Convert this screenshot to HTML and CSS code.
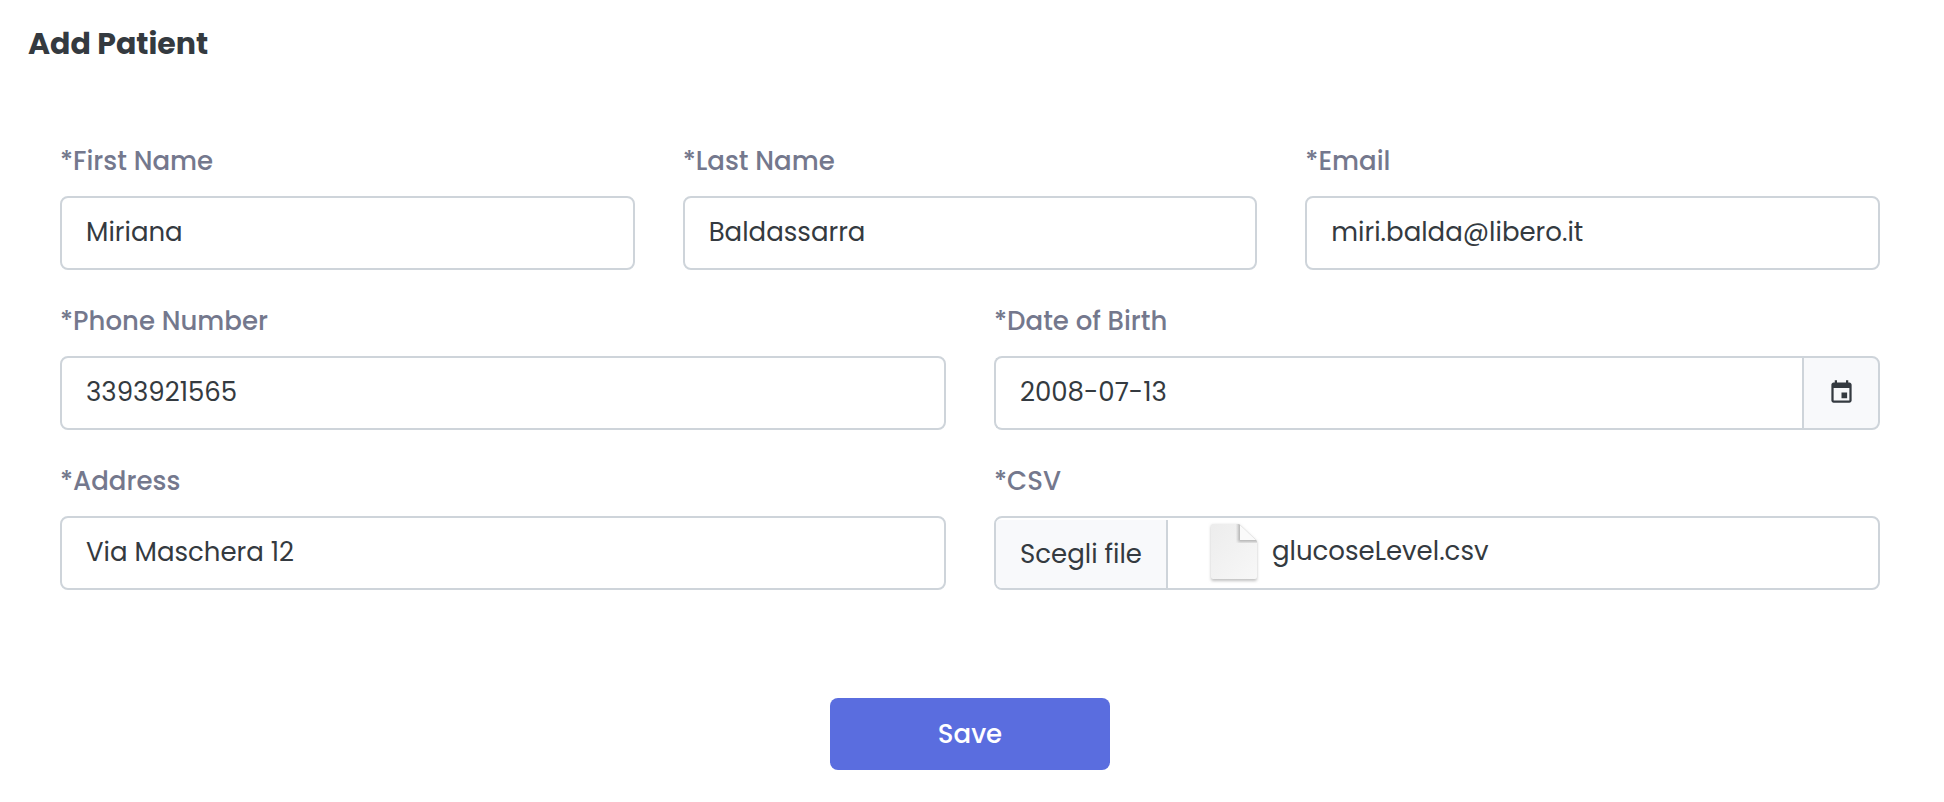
FILE: index.html
```html
<!DOCTYPE html>
<html lang="en">
<head>
<meta charset="utf-8">
<title>Add Patient</title>
<link rel="stylesheet" href="styles.css">
</head>
<body>
<main class="page">
  <h1 class="title">Add Patient</h1>
  <form class="form">
    <div class="row">
      <div class="field">
        <label class="label" for="first-name">*First Name</label>
        <input class="control" id="first-name" type="text" value="Miriana">
      </div>
      <div class="field">
        <label class="label" for="last-name">*Last Name</label>
        <input class="control" id="last-name" type="text" value="Baldassarra">
      </div>
      <div class="field">
        <label class="label" for="email">*Email</label>
        <input class="control" id="email" type="email" value="miri.balda@libero.it">
      </div>
    </div>
    <div class="row">
      <div class="field">
        <label class="label" for="phone">*Phone Number</label>
        <input class="control" id="phone" type="tel" value="3393921565">
      </div>
      <div class="field">
        <label class="label" for="birth">*Date of Birth</label>
        <div class="group">
          <input class="control group-input" id="birth" type="text" value="2008-07-13">
          <button class="group-button" type="button" aria-label="Open calendar">
            <svg class="calendar" viewBox="0 0 24 24" aria-hidden="true"><path d="M17 12h-5v5h5v-5zM16 1v2H8V1H6v2H5c-1.11 0-1.99.9-1.99 2L3 19c0 1.1.89 2 2 2h14c1.1 0 2-.9 2-2V5c0-1.1-.9-2-2-2h-1V1h-2zm3 18H5V8h14v11z"/></svg>
          </button>
        </div>
      </div>
    </div>
    <div class="row">
      <div class="field">
        <label class="label" for="address">*Address</label>
        <input class="control" id="address" type="text" value="Via Maschera 12">
      </div>
      <div class="field">
        <label class="label" for="csv">*CSV</label>
        <div class="file">
          <input class="file-input" id="csv" type="file" accept=".csv">
          <label class="file-button" for="csv">Scegli file</label>
          <svg class="file-icon" viewBox="0 0 52 62" aria-hidden="true">
            <defs>
              <linearGradient id="paper" x1="0" y1="0" x2="1" y2="1">
                <stop offset="0" stop-color="#ececec"/>
                <stop offset="1" stop-color="#f8f8f8"/>
              </linearGradient>
              <filter id="soft" x="-10%" y="-10%" width="120%" height="120%"><feGaussianBlur stdDeviation="1.4"/></filter>
              <clipPath id="sheet"><path d="M6 2H31L49 19V55Q49 57 47 57H5Q3 57 3 55V5Q3 2 6 2Z"/></clipPath>
            </defs>
            <path d="M6 3H31L49 20V57Q49 59 47 59H5Q3 59 3 57V5Q3 3 6 3Z" fill="#c0c0c0" filter="url(#soft)"/>
            <g clip-path="url(#sheet)">
              <path d="M0 0H52V62H0Z" fill="url(#paper)"/>
              <path d="M31 0V19H52L31 0Z" fill="#b4b4b4" stroke="#b4b4b4" stroke-width="2" filter="url(#soft)"/>
              <path d="M32 2V18H49Z" fill="#fafafa"/>
            </g>
          </svg>
          <span class="file-name">glucoseLevel.csv</span>
        </div>
      </div>
    </div>
    <button class="save" type="submit">Save</button>
  </form>
</main>
</body>
</html>
```
FILE: styles.css
```css
* {
  box-sizing: border-box;
}

body {
  margin: 0;
  background: #fff;
  color: #343a40;
  font-family: Poppins, Inter, sans-serif;
  font-size: 26px;
  line-height: 40px;
}

.page {
  padding: 24px 28px 32px;
}

.title {
  margin: 0;
  font-size: 30px;
  font-weight: 700;
  line-height: 40px;
}

.form {
  display: flex;
  flex-direction: column;
  gap: 31px;
  padding: 77px 36px 0 32px;
}

.row {
  display: flex;
  gap: 48px;
}

.field {
  display: flex;
  flex: 1 1 0;
  flex-direction: column;
  gap: 15px;
  min-width: 0;
}

.label {
  color: #74788d;
  font-weight: 500;
}

.control,
.file {
  width: 100%;
  height: 74px;
  border: 2px solid #ced4da;
  border-radius: 8px;
  background: #fff;
}

.control {
  padding: 0 24px 2px;
  color: inherit;
  font: inherit;
}

.group {
  display: flex;
}

.group-input {
  flex: 1;
  min-width: 0;
  border-right: 0;
  border-radius: 8px 0 0 8px;
}

.group-button {
  display: flex;
  align-items: center;
  justify-content: center;
  width: 78px;
  padding: 0 0 2px;
  border: 2px solid #ced4da;
  border-radius: 0 8px 8px 0;
  background: #f8f9fb;
  color: inherit;
}

.calendar {
  width: 27px;
  height: 27px;
  fill: currentColor;
}

.file {
  position: relative;
  display: flex;
  align-items: center;
  overflow: hidden;
}

.file-input {
  position: absolute;
  inset: 0;
  opacity: 0;
}

.file-button {
  display: flex;
  align-items: center;
  align-self: flex-end;
  height: 68px;
  padding: 0 24px;
  border-right: 2px solid #ced4da;
  background: #f8f9fb;
}

.file-icon {
  width: 52px;
  height: 62px;
  margin: 0 12px 0 40px;
}

.file-name {
  padding-bottom: 4px;
}

.save {
  align-self: center;
  width: 280px;
  height: 72px;
  margin-top: 77px;
  border: 0;
  border-radius: 8px;
  background: #5a6ddf;
  color: #fff;
  font: inherit;
  font-weight: 500;
}
```
